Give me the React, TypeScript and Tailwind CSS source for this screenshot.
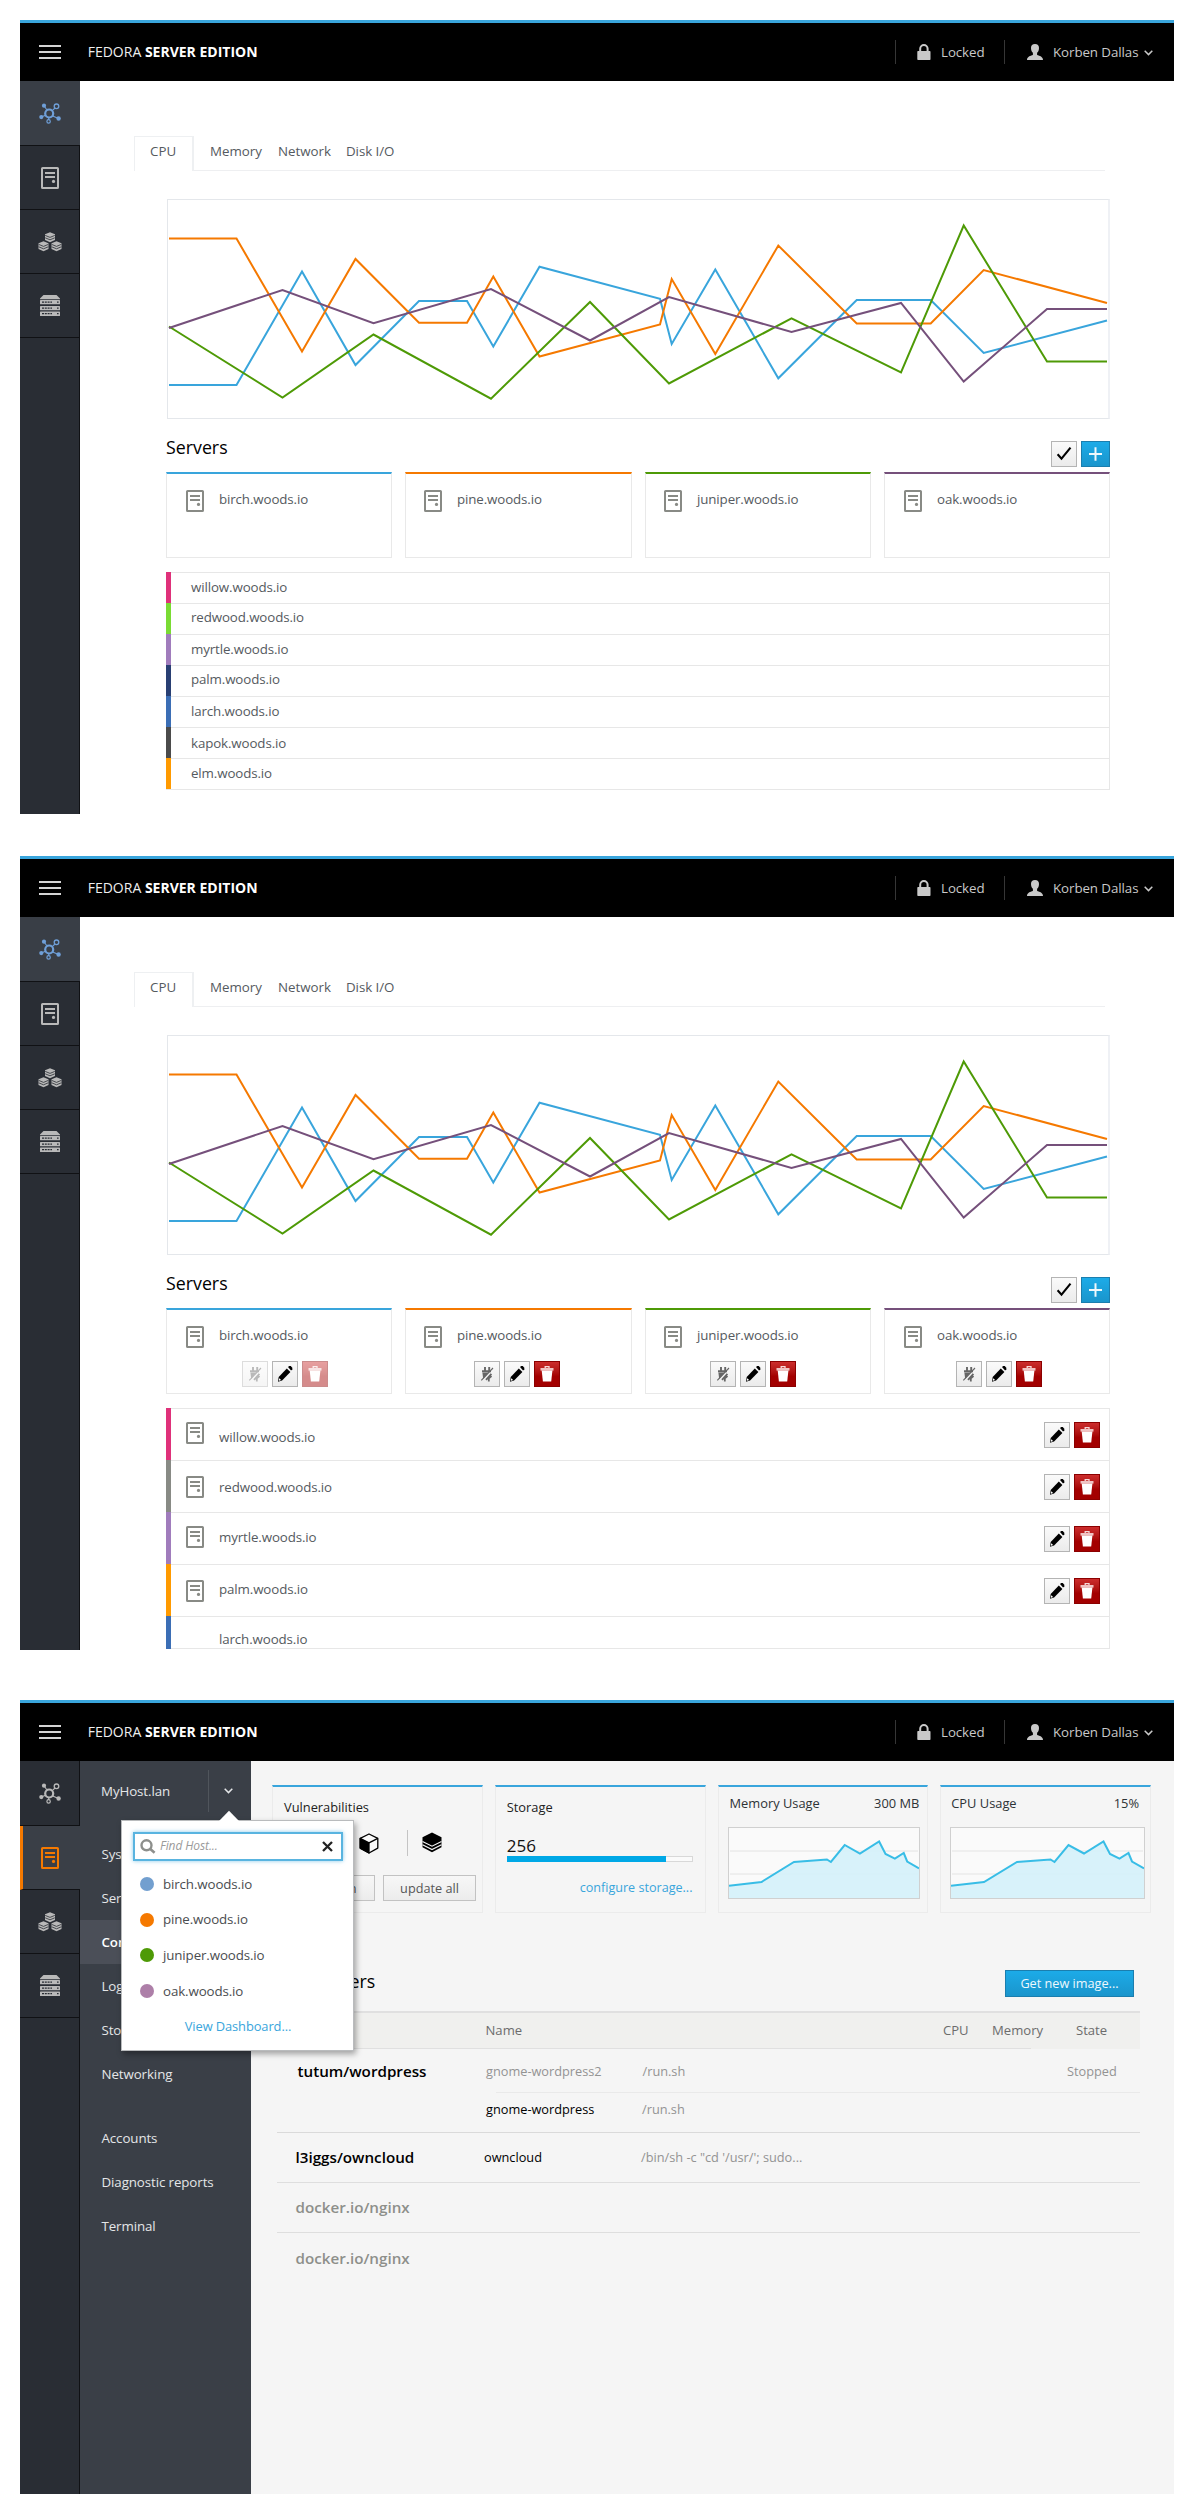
import type { ReactNode } from "react";

/* ---------- icons ---------- */

function HubIcon() {
  return (
    <svg width="24" height="24" viewBox="38 100 24 24" fill="none" stroke="currentColor">
      <circle cx="49.2" cy="112.5" r="4" strokeWidth="2.2" />
      <circle cx="44" cy="104.7" r="2.1" fill="currentColor" stroke="none" />
      <circle cx="56.5" cy="105.3" r="2.3" strokeWidth="1.3" />
      <circle cx="41.3" cy="116.1" r="2.1" fill="currentColor" stroke="none" />
      <circle cx="58.6" cy="117.5" r="2.2" fill="currentColor" stroke="none" />
      <circle cx="48.6" cy="120.4" r="1.7" strokeWidth="1.2" />
      <path d="M44 104.7l2.800 4M55 107l-3 2.800M41.300 116.100l4.200-1.800M58.600 117.500l-6-2.600M48.700 116.500v2.400" strokeWidth="1.1" />
    </svg>
  );
}

function ServerIcon() {
  return (
    <svg width="18" height="22" viewBox="0 0 18 22" fill="none" stroke="currentColor" className="block shrink-0">
      <rect x="1" y="1" width="16" height="20" rx="0.6" strokeWidth="2" />
      <path d="M4 6h10M4 10h10" strokeWidth="2" />
      <circle cx="12.5" cy="14.4" r="1.6" fill="currentColor" stroke="none" />
    </svg>
  );
}

function MiniStack({ x, y }: { x: number; y: number }) {
  return (
    <g transform={`translate(${x} ${y})`}>
      <path d="M0 2L5 0l5 2v5.8L5 10 0 7.800z" fill="currentColor" />
      <path d="M.2 3.200l4.800 2 4.800-2M.2 5.600l4.800 2 4.800-2" fill="none" stroke="#292d34" strokeWidth="0.8" />
    </g>
  );
}

function CubesIcon() {
  return (
    <svg width="24" height="20" viewBox="0 0 24 20">
      <MiniStack x={7} y={0.2} />
      <MiniStack x={0.5} y={9.2} />
      <MiniStack x={13.500} y={9.2} />
    </svg>
  );
}

function RackIcon() {
  return (
    <svg width="20" height="22" viewBox="0 0 20 22" fill="currentColor">
      <path d="M3.500 0h13L20 3.600V4.200H0V3.600z" />
      {[5, 11, 16.600].map((y) => (
        <g key={y}>
          <rect x="0" y={y} width="20" height="4.300" rx="0.500" />
          <path d={`M2 ${y + 2.1}h10`} stroke="#292d34" strokeWidth="1.300" strokeDasharray="2 0.800" />
          <path d={`M17 ${y + 2.1}h1.600`} stroke="#292d34" strokeWidth="1.300" />
        </g>
      ))}
    </svg>
  );
}

function LockIcon() {
  return (
    <svg width="14" height="16" viewBox="0 0 14 16">
      <path d="M3.200 8V4.800a3.700 3.700 0 0 1 7.400 0V8" fill="none" stroke="currentColor" strokeWidth="2" />
      <rect x="0.300" y="7" width="13.200" height="9" rx="0.700" fill="currentColor" />
    </svg>
  );
}

function UserIcon() {
  return (
    <svg width="16" height="16" viewBox="0 0 16 16" fill="currentColor">
      <path d="M8 0c2.600 0 4 1.600 4 3.900 0 2.300-.8 3.800-1.900 4.900v2.200c2.500.8 5.900 1.700 5.900 5H0c0-3.300 3.400-4.200 5.900-5V8.800C4.800 7.700 4 6.200 4 3.900 4 1.600 5.400 0 8 0z" />
    </svg>
  );
}

function Chevron({ className }: { className: string }) {
  return (
    <svg width="9" height="6" viewBox="0 0 9 6" fill="none" stroke="currentColor" strokeWidth="1.500" className={className}>
      <path d="M.7.8l3.800 3.800L8.300.8" />
    </svg>
  );
}

function CheckIcon() {
  return (
    <svg width="24" height="24" viewBox="0 0 24 24" fill="none" stroke="#000" strokeWidth="2.100">
      <path d="M5.600 12.300l3.900 4.300 9-11" />
    </svg>
  );
}

function PlusIcon() {
  return (
    <svg width="27" height="24" viewBox="0 0 27 24" stroke="#f0f8fc" strokeWidth="2">
      <path d="M7 11.900h13M13.500 5.200v13.600" />
    </svg>
  );
}

function PencilIcon() {
  return (
    <svg width="24" height="24" viewBox="0 0 24 24">
      <path d="M15 5l1.200-.9h1.600l1.500 1.600v1.500l-1.200 1.400z" fill="#000" />
      <path d="M13.800 6.600l3.600 3.500-8.300 8.300-4.100 1.400.7-4.700z" fill="#000" />
      <path d="M6.300 16.300l1.800 1.800-1.700.7-.7-.6z" fill="#fff" />
    </svg>
  );
}

function TrashIcon() {
  return (
    <svg width="24" height="24" viewBox="0 0 24 24" fill="#fff">
      <path d="M10.200 6.200V4.700h3.800v1.500" fill="none" stroke="#f6dada" strokeWidth="1.300" />
      <path d="M5.500 6h13v2.600h-13z" fill="#f0c4c4" />
      <path d="M6.700 8.600h10.700l-1.200 10.900H7.900z" />
    </svg>
  );
}

function UnplugIcon() {
  return (
    <svg width="24" height="24" viewBox="0 0 24 24" fill="none" stroke="#666">
      <path d="M10 5v4M14.200 5v3.500M7 9.200h9" strokeWidth="1.900" />
      <path d="M7.400 10.500h6.600L8.200 17z" fill="#666" stroke="none" />
      <path d="M16.400 11.800l-5.400 6M16.500 14l-2.700 2.400v3" strokeWidth="1.800" />
      <path d="M6.300 18.300L18 6" strokeWidth="1.100" />
    </svg>
  );
}

function CubeIcon() {
  return (
    <svg width="20" height="21" viewBox="0 0 20 21" stroke="#000" strokeWidth="1.300" strokeLinejoin="round">
      <path d="M10 1l8.800 4.300v9.800L10 20l-8.800-4.900V5.300z" fill="#fafafa" />
      <path d="M1.200 5.300L10 9.800V20l-8.800-4.900z" fill="#000" />
      <path d="M10 9.800l8.800-4.500" fill="none" />
    </svg>
  );
}

function StackIcon() {
  return (
    <svg width="20" height="21" viewBox="0 0 20 21">
      <path d="M10 .5l9.500 4.800v10L10 20.300.5 15.300v-10z" fill="#000" />
      <path d="M.5 9.500L10 14.200l9.500-4.700M.5 12.800L10 17.500l9.500-4.700" fill="none" stroke="#f5f5f5" strokeWidth="1.200" />
    </svg>
  );
}

/* ---------- buttons ---------- */

const GRAY = "flex h-[26px] w-[26px] items-center justify-center border border-[#b4b4b4] bg-linear-to-b from-[#fafafa] to-[#ebebeb]";
const RED = "flex h-[26px] w-[26px] items-center justify-center border border-[#8b0000] bg-linear-to-b from-[#cc2c2c] via-[#a30000] via-60% to-[#a30000]";

function PencilButton() {
  return <button className={GRAY}><PencilIcon /></button>;
}

function TrashButton() {
  return <button className={RED}><TrashIcon /></button>;
}

/* ---------- shell ---------- */

function TopBar() {
  return (
    <header className="flex h-[61px] border-t-[3px] border-[#39a5dc] bg-black text-[#c9c9c9]">
      <div className="ml-[19px] mt-[22px] flex w-[22px] flex-col gap-1">
        <span className="h-0.5 bg-[#d4d4d4]" />
        <span className="h-0.5 bg-[#d4d4d4]" />
        <span className="h-0.5 bg-[#d4d4d4]" />
      </div>
      <div className="ml-[26.700px] mt-[19px] text-[14px] leading-5 text-[#efefef]">
        FEDORA <b className="text-white">SERVER EDITION</b>
      </div>
      <div className="ml-auto flex tracking-[-0.080px]">
        <div className="mt-[17px] flex h-6 w-[109px] border-l border-[#363636]">
          <span className="ml-[21px] mt-1"><LockIcon /></span>
          <span className="ml-[10px] mt-0.5 leading-5">Locked</span>
        </div>
        <div className="mt-[17px] flex h-6 w-[170px] border-l border-[#363636]">
          <span className="ml-[22px] mt-1"><UserIcon /></span>
          <span className="ml-[10px] mt-0.5 whitespace-nowrap leading-5">Korben Dallas</span>
          <Chevron className="ml-[6px] mt-[10px]" />
        </div>
      </div>
    </header>
  );
}

function Rail({ variant }: { variant: "dashboard" | "host" }) {
  const base = "flex items-center justify-center border-b border-[#101114] text-[#b9b9b9]";
  return (
    <nav className="flex w-[60px] shrink-0 flex-col bg-[#292d34]">
      {variant === "dashboard" ? (
        <>
          <div className="flex h-[65px] items-center justify-center border-b border-[#101114] bg-[#393e46] text-[#6f9fd8]"><HubIcon /></div>
          <div className={`${base} h-16 border-r`}><ServerIcon /></div>
        </>
      ) : (
        <>
          <div className={`${base} h-[65px] border-r`}><HubIcon /></div>
          <div className="flex h-16 items-center justify-center border-b border-l-[3px] border-b-[#101114] border-l-[#f57900] bg-[#3a3f47] pr-[3px] text-[#f57900]"><ServerIcon /></div>
        </>
      )}
      <div className={`${base} h-16 border-r`}><CubesIcon /></div>
      <div className={`${base} h-16 border-r`}><RackIcon /></div>
      <div className="flex-1 border-r border-[#101114]" />
    </nav>
  );
}

function Shell({ variant, children }: { variant: "dashboard" | "host"; children: ReactNode }) {
  return (
    <section className="flex h-[794px] w-[1154px] flex-col">
      <TopBar />
      <div className="flex flex-1">
        <Rail variant={variant} />
        {children}
      </div>
    </section>
  );
}

/* ---------- dashboard ---------- */

const SERIES = [
  { color: "#39a5dc", points: "169,385 236.5,385 302,271.5 355.5,365 419,301 467,301 493.3,346.5 539.5,266.7 660,298.7 671.7,344 715.3,269.5 778.3,378.3 856.7,300 930.7,300 983.7,353 1107,320.5" },
  { color: "#f57900", points: "169,238.5 236.5,238.5 302,351.5 355.5,259 419,322.7 467,322.7 493.3,276.5 539.5,356.5 660,324.5 671.7,279 715.3,354 778.3,245.500 856.7,323.5 930.7,323.5 983.7,270 1107,303" },
  { color: "#4e9a06", points: "169,326.5 282.5,397.5 373.5,334.5 491,398.7 590,302 669,383.5 791.5,318.3 901,372.5 963.7,225.5 1047,361.5 1107,361.5" },
  { color: "#75507b", points: "169,328 282.5,290 373.5,323.3 491,289 590,340.500 669,297 791.5,332 901,303 963.7,381.5 1047,309 1107,309" },
];

function Tabs() {
  return (
    <div className="ml-[54px] mt-[55px] flex h-[35px] w-[971px] text-[#555a60]">
      <div className="w-[60px] border-l border-r-2 border-t border-[#eef0f2] pl-[15px] pt-1 leading-5">CPU</div>
      <div className="flex flex-1 border-b border-[#eeeff1] pl-[16px] pt-[5px] leading-5">
        <span className="w-[68px]">Memory</span>
        <span className="w-[68px]">Network</span>
        <span className="tracking-[-0.060px]">Disk I/O</span>
      </div>
    </div>
  );
}

const CARDS = [
  { name: "birch.woods.io", top: "border-t-[#39a5dc]", pad: "pl-[19px]", act: "ml-[75px]", dim: true },
  { name: "pine.woods.io", top: "border-t-[#f57900]", pad: "pl-[17.75px]", act: "ml-[67.75px]", dim: false },
  { name: "juniper.woods.io", top: "border-t-[#4e9a06]", pad: "pl-[18.5px]", act: "ml-[64.5px]", dim: false },
  { name: "oak.woods.io", top: "border-t-[#75507b]", pad: "pl-[19.25px]", act: "ml-[71.25px]", dim: false },
];

const COMPACT = [
  { name: "willow.woods.io", bar: "bg-[#df317a]", pt: "pt-1" },
  { name: "redwood.woods.io", bar: "bg-[#7adb34]", pt: "pt-[3px]" },
  { name: "myrtle.woods.io", bar: "bg-[#a07cbc]", pt: "pt-1" },
  { name: "palm.woods.io", bar: "bg-[#293f73]", pt: "pt-[3px]" },
  { name: "larch.woods.io", bar: "bg-[#3b6eb5]", pt: "pt-1" },
  { name: "kapok.woods.io", bar: "bg-[#4b4b4b]", pt: "pt-[5px]" },
  { name: "elm.woods.io", bar: "bg-[#ff9a00]", pt: "pt-1" },
];

const EDITABLE = [
  { name: "willow.woods.io", bar: "bg-[#df317a]", icon: "mt-[13px]", label: "mt-[18px]" },
  { name: "redwood.woods.io", bar: "bg-[#888a85]", icon: "mt-[15px]", label: "mt-4" },
  { name: "myrtle.woods.io", bar: "bg-[#a07cbc]", icon: "mt-[13px]", label: "mt-[14px]" },
  { name: "palm.woods.io", bar: "bg-[#ff9a00]", icon: "mt-[15px]", label: "mt-[14px]" },
];

function Dashboard({ editing }: { editing: boolean }) {
  return (
    <main className="flex-1">
      <Tabs />
      <div className="ml-[86px] mt-[28px] w-[944px] tracking-[-0.120px] text-[#555a60]">
        <div className="ml-px h-[220px] border border-r-2 border-[#e4e7eb] border-r-[#eff1f5]">
          <svg width="940" height="218" viewBox="168 200 940 218" fill="none" className="block">
            {SERIES.map((s) => (
              <polyline key={s.color} points={s.points} stroke={s.color} strokeWidth="2" />
            ))}
          </svg>
        </div>
        <div className="flex h-[53px] justify-between">
          <h2 className="pt-4 text-[17.8px] leading-6 tracking-normal text-black">Servers</h2>
          <div className="flex gap-1 pt-[22px]">
            <button className={GRAY}><CheckIcon /></button>
            <button className="flex h-[26px] w-[29px] items-center justify-center border border-[#1b7eae] bg-linear-to-b from-[#1cabe8] to-[#1a95cc]"><PlusIcon /></button>
          </div>
        </div>
        <div className="grid grid-cols-4 gap-[13px]">
          {CARDS.map((c) => (
            <div key={c.name} className={`h-[86px] border border-t-2 border-[#e9e9e9] ${c.top}`}>
              <div className={`flex h-[51px] ${c.pad}`}>
                <span className="mt-4 text-[#888a85]"><ServerIcon /></span>
                <span className="ml-[15px] mt-[15px] leading-5">{c.name}</span>
              </div>
              {editing && (
                <div className={`flex gap-1 ${c.act}`}>
                  <div className={c.dim ? "opacity-45" : ""}><button className={GRAY}><UnplugIcon /></button></div>
                  <PencilButton />
                  <div className={c.dim ? "opacity-45" : ""}><TrashButton /></div>
                </div>
              )}
            </div>
          ))}
        </div>
        {editing ? (
          <div className="mt-[14px]">
            {EDITABLE.map((r) => (
              <div key={r.name} className="flex h-[52px]">
                <span className={`w-[5px] ${r.bar}`} />
                <div className="flex flex-1 border-r border-t border-[#e7e7e7] pl-[15px]">
                  <span className={`text-[#888a85] ${r.icon}`}><ServerIcon /></span>
                  <span className={`ml-[15px] leading-5 ${r.label}`}>{r.name}</span>
                  <div className="ml-auto mr-[9px] mt-[13px] flex gap-1"><PencilButton /><TrashButton /></div>
                </div>
              </div>
            ))}
            <div className="flex h-[33px]">
              <span className="w-[5px] bg-[#3b6eb5]" />
              <div className="flex-1 border border-l-0 border-[#e7e7e7] pl-[48px] pt-[12px] leading-5">larch.woods.io</div>
            </div>
          </div>
        ) : (
          <div className="mt-[14px] border-b border-[#e7e7e7]">
            {COMPACT.map((r) => (
              <div key={r.name} className="flex h-[31px]">
                <span className={`w-[5px] ${r.bar}`} />
                <div className={`flex-1 border-r border-t border-[#e7e7e7] pl-[20px] leading-5 ${r.pt}`}>{r.name}</div>
              </div>
            ))}
          </div>
        )}
      </div>
    </main>
  );
}

/* ---------- host page ---------- */

function Spark() {
  const line = "0,57.7 33,54 66,34 99.5,31.5 103.5,34 117.5,17 133,25.5 152.5,13.5 159,26 168.5,30.7 177.500,25 181,33.500 193,40.500";
  return (
    <svg viewBox="0 0 193 70" preserveAspectRatio="none" className="block h-full w-full bg-[#fafafa]">
      <path d="M1 23h191M1 46h191" stroke="#e4e4e4" strokeWidth="1" />
      <polygon points={`0,70 ${line} 193,70`} fill="#d5f1fa" fillOpacity="0.92" />
      <polyline points={line} fill="none" stroke="#38bde6" strokeWidth="2" vectorEffect="non-scaling-stroke" />
    </svg>
  );
}

const HOSTS = [
  { name: "birch.woods.io", dot: "bg-[#729fcf]" },
  { name: "pine.woods.io", dot: "bg-[#f57900]" },
  { name: "juniper.woods.io", dot: "bg-[#4e9a06]" },
  { name: "oak.woods.io", dot: "bg-[#ad7fa8]" },
];

function HostPicker() {
  return (
    <div className="absolute left-[41px] top-[59px] h-[231px] w-[233px] border border-[#b9bbbd] bg-white shadow-[2px_3px_6px_rgba(0,0,0,0.35)]">
      <svg width="22" height="12" viewBox="0 0 22 12" className="absolute -top-[11px] left-[96px]">
        <path d="M0 12L11 .8 22 12z" fill="#fff" />
      </svg>
      <div className="ml-[11px] mt-[11px] flex h-[29px] w-[210px] border-2 border-[#59b4e0] bg-white shadow-[0_0_4px_rgba(57,165,220,0.6)]">
        <svg width="16" height="16" viewBox="0 0 16 16" fill="none" stroke="#8d8f8c" className="ml-[5px] mt-[5px] shrink-0">
          <circle cx="6.500" cy="6.300" r="5" strokeWidth="2.400" />
          <path d="M10 9.800l4.600 4" strokeWidth="2.600" />
        </svg>
        <span className="ml-1 mt-[2px] text-[12px] italic leading-5 text-[#9a9a9a]">Find Host...</span>
        <svg width="11" height="11" viewBox="0 0 11 11" stroke="#222" strokeWidth="2.300" className="ml-auto mr-[8px] mt-[7px]">
          <path d="M1 1l9 9M10 1l-9 9" />
        </svg>
      </div>
      <ul className="mt-[5px]">
        {HOSTS.map((h) => (
          <li key={h.name} className="flex h-[35.600px] items-center pl-[18px] tracking-[-0.120px] text-[#4a4d50]">
            <span className={`mt-px size-[14px] rounded-full ${h.dot}`} />
            <span className="ml-[9px] leading-5">{h.name}</span>
          </li>
        ))}
      </ul>
      <div className="mt-[7.600px] pl-px text-center text-[12.900px] leading-5 text-[#39a5dc]">View Dashboard...</div>
    </div>
  );
}

function SubNav() {
  const row = "h-11 pl-[21.500px] pt-3 leading-5";
  return (
    <aside className="relative w-[171px] shrink-0 bg-[#3a3f47] tracking-[-0.100px] text-[#e4e6e8]">
      <div className="flex h-[71px]">
        <span className="ml-[21px] mt-5 w-[107px] leading-5">MyHost.lan</span>
        <span className="mt-[9px] h-[42px] w-px border-r border-[#50555c] bg-[#50555c]" />
        <Chevron className="ml-[15px] mt-[27px]" />
      </div>
      <div className={row}>System</div>
      <div className={row}>Services</div>
      <div className={`${row} bg-[#4b4f58] font-semibold text-white`}>Containers</div>
      <div className={row}>Logs</div>
      <div className={row}>Storage</div>
      <div className={row}>Networking</div>
      <div className={`${row} mt-5`}>Accounts</div>
      <div className={row}>Diagnostic reports</div>
      <div className={row}>Terminal</div>
      <HostPicker />
    </aside>
  );
}

function StatCards() {
  const card = "flex h-[128px] flex-col border border-t-2 border-[#ebebeb] border-t-[#39a5dc]";
  const btn = "h-[26px] border border-[#c2c2c2] bg-linear-to-b from-[#f7f7f7] to-[#ececec] text-center leading-[23px] text-[#555]";
  return (
    <div className="ml-[21px] mt-[24px] grid w-[879px] grid-cols-4 gap-3 text-[12.850px] text-[#2e3336]">
      <div className={card}>
        <div className="ml-[11px] mt-[10px] leading-5 text-[#222]">Vulnerabilities</div>
        <div className="ml-[86px] mt-[13px] flex h-[26px]">
          <span className="mt-[3px]"><CubeIcon /></span>
          <span className="ml-[28px] w-px bg-[#c4c4c4]" />
          <span className="ml-[14px] mt-0.5"><StackIcon /></span>
        </div>
        <div className="ml-[11px] mt-[19px] flex gap-2 text-[12.700px]">
          <button className={`${btn} w-[91px] pl-[3px]`}>run scan</button>
          <button className={`${btn} w-[93px]`}>update all</button>
        </div>
      </div>
      <div className={card}>
        <div className="ml-[11px] mt-[10px] leading-5 text-[#222]">Storage</div>
        <div className="ml-[11px] mt-[17px] text-[17px] leading-6 text-[#111]">256</div>
        <div className="ml-[11px] -mt-[2px] flex h-[6px] w-[186px] border border-[#d8d8d8] bg-[#fafafa]">
          <div className="-my-px -ml-px w-[159px] bg-[#00a8e6]" />
        </div>
        <div className="mr-[12px] mt-[16px] text-right text-[12.600px] leading-5 text-[#39a5dc]">configure storage...</div>
      </div>
      <div className={card}>
        <div className="ml-[11px] mr-[8px] mt-[6px] flex justify-between leading-5"><span>Memory Usage</span><span>300 MB</span></div>
        <div className="ml-[9.500px] mt-[14px] h-[72px] w-[192px] border border-[#d0d0d0]"><Spark /></div>
      </div>
      <div className={card}>
        <div className="ml-[10px] mr-[11px] mt-[6px] flex justify-between leading-5"><span>CPU Usage</span><span>15%</span></div>
        <div className="ml-[9px] mt-[14px] h-[72px] w-[195px] border border-[#d0d0d0]"><Spark /></div>
      </div>
    </div>
  );
}

function ContainerTable() {
  const image = "shrink-0 text-[15.200px] font-semibold";
  return (
    <div className="ml-[26px] w-[863px] text-[12.750px] leading-5">
      <div className="h-[38px] border-t-2 border-[#e0e0e0] bg-[#f0f0ee] text-[13.100px] text-[#6c6c6c]">
        <div className="flex h-[35px] pt-[7px]">
          <span className="ml-[208.500px] w-[457.500px]">Name</span>
          <span className="w-[49px]">CPU</span>
          <span className="w-[84px]">Memory</span>
          <span>State</span>
        </div>
        <div className="h-px w-[754px] bg-[#e0e0e0]" />
      </div>
      <div className="flex h-[84px] border-b border-[#dadada]">
        <span className={`${image} ml-[20.500px] w-[188.500px] pt-3 text-black`}>tutum/wordpress</span>
        <div className="flex-1 text-[#939393]">
          <div className="flex pt-3">
            <span className="w-[156.500px]">gnome-wordpress2</span>
            <span className="w-[424.500px]">/run.sh</span>
            <span>Stopped</span>
          </div>
          <div className="ml-[10px] mt-[11px] h-px bg-[#e9e9e9]" />
          <div className="flex pt-[6px]">
            <span className="w-[156px] text-black">gnome-wordpress</span>
            <span>/run.sh</span>
          </div>
        </div>
      </div>
      <div className="flex h-[50px] border-b border-[#dedede] pt-[14px]">
        <span className={`${image} ml-[18.500px] w-[188.500px] text-black`}>l3iggs/owncloud</span>
        <span className="w-[157px] text-black">owncloud</span>
        <span className="text-[#939393]">/bin/sh -c "cd '/usr/'; sudo...</span>
      </div>
      <div className="flex h-[50px] border-b border-[#dedede] pt-[14px]">
        <span className={`${image} ml-[18.500px] text-[#8d8f8a]`}>docker.io/nginx</span>
      </div>
      <div className="flex pt-[15px]">
        <span className={`${image} ml-[18.500px] text-[#8d8f8a]`}>docker.io/nginx</span>
      </div>
    </div>
  );
}

function HostPage() {
  return (
    <>
      <SubNav />
      <main className="flex-1 bg-[#f5f5f5]">
        <StatCards />
        <div className="ml-[34px] mr-[40px] flex h-[98px] justify-between">
          <h2 className="pt-[56px] text-[17.800px] leading-6 text-black">Containers</h2>
          <button className="mt-[57px] h-[27px] w-[129px] border border-[#1b7eae] bg-linear-to-b from-[#1cabe8] to-[#1a95cc] text-[12.700px] leading-[23px] text-[#eef8fd]">Get new image...</button>
        </div>
        <ContainerTable />
      </main>
    </>
  );
}

export default function App() {
  return (
    <div className="h-[2514px] w-[1194px] bg-white px-5 pt-5 font-['Open_Sans',sans-serif] text-[13.333px]">
      <Shell variant="dashboard"><Dashboard editing={false} /></Shell>
      <div className="mt-[42px]"><Shell variant="dashboard"><Dashboard editing /></Shell></div>
      <div className="mt-[50px]"><Shell variant="host"><HostPage /></Shell></div>
    </div>
  );
}
